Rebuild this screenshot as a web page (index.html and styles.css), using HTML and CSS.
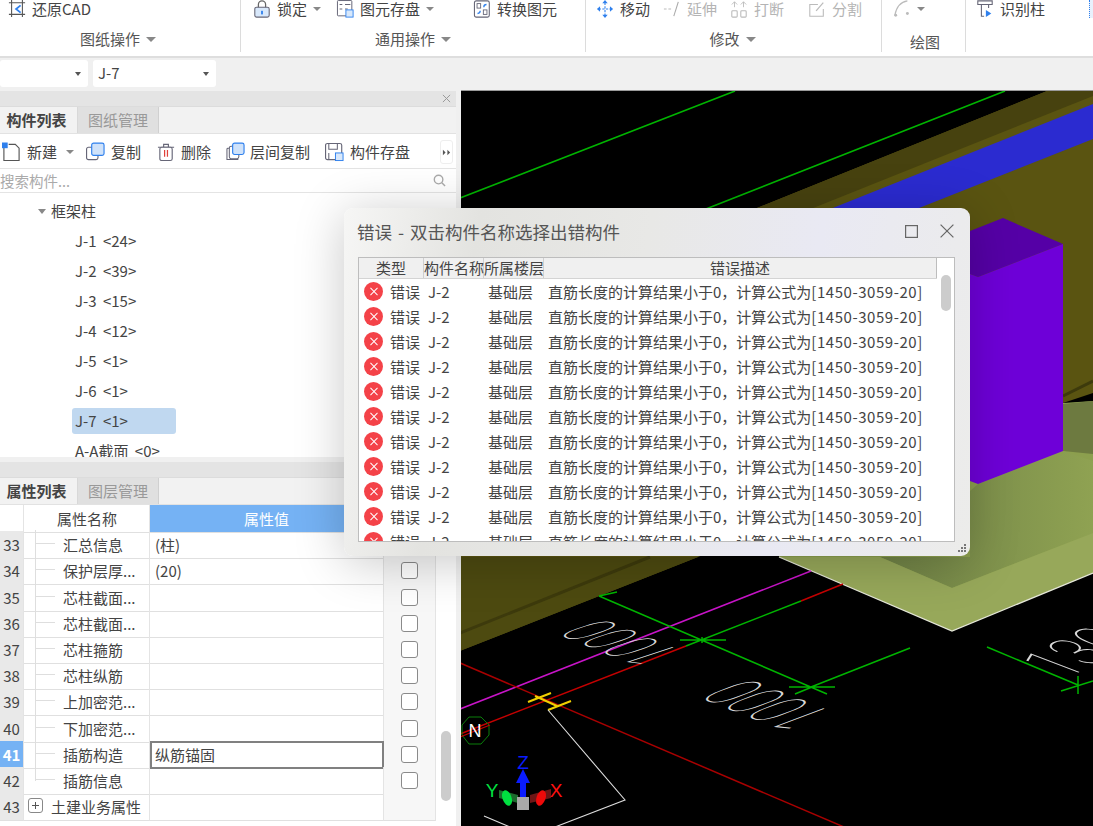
FILE: index.html
```html
<!DOCTYPE html>
<html lang="zh">
<head>
<meta charset="utf-8">
<title>错误</title>
<link rel="stylesheet" href="styles.css">
</head>
<body>
<div class="app">
  <header class="ribbon">
    <section class="group g1">
      <div class="tools">
        <span class="tool"><svg class="ico" viewBox="0 0 18 20"><path d="M0 16H18M3 0V19M15 0V19M0 3H18" fill="none" stroke="#555" stroke-width="1.2"/><path d="M13 6L8 10l5 4" fill="none" stroke="#2f80ed" stroke-width="2"/></svg>还原CAD</span>
      </div>
      <div class="glabel">图纸操作<i class="caret"></i></div>
    </section>
    <section class="group g2">
      <div class="tools">
        <span class="tool"><svg class="ico" viewBox="0 0 18 20"><path d="M5 9V5a4 4 0 0 1 8 0v4" fill="none" stroke="#666" stroke-width="1.4"/><rect x="1" y="8" width="16" height="11" rx="2" fill="#d8e8fb" stroke="#667" stroke-width="1.2"/><rect x="8" y="12" width="2" height="4" fill="#2f80ed"/></svg>锁定<i class="caret small"></i></span>
        <span class="tool t-save"><svg class="ico" viewBox="0 0 18 20"><rect x=".6" y=".6" width="16" height="17" rx="1" fill="#fff" stroke="#667" stroke-width="1.1"/><path d="M3 5h3M9 5h6M3 10h3M9 10h3" stroke="#667" stroke-width="1.2"/><rect x="10" y="11" width="8" height="8" fill="#d8e8fb" stroke="#2f80ed"/></svg>图元存盘<i class="caret small"></i></span>
        <span class="tool t-conv"><svg class="ico" viewBox="0 0 18 20"><rect x=".6" y="1" width="16.5" height="18" rx="2" fill="#fff" stroke="#667" stroke-width="1.2"/><rect x="3.5" y="4" width="4" height="5" fill="none" stroke="#667"/><rect x="10.5" y="11" width="4" height="5" fill="none" stroke="#667"/><path d="M11 8c0-2 1-3 3-3M7 12c0 2-1 3-3 3" fill="none" stroke="#2f80ed" stroke-width="1.4"/></svg>转换图元</span>
      </div>
      <div class="glabel">通用操作<i class="caret"></i></div>
    </section>
    <section class="group g3">
      <div class="tools">
        <span class="tool"><svg class="ico" viewBox="0 0 18 20"><path d="M9 3v14M2 10h14" stroke="#2f80ed" stroke-width="1.2" stroke-dasharray="2.5 1.5"/><path d="M9 0l3 3.5H6zM9 20l3-3.5H6zM0 10l3.5-3v6zM18 10l-3.500-3v6z" fill="#2f80ed"/></svg>移动</span>
        <span class="tool off t-ext"><svg class="ico" viewBox="0 0 18 20"><path d="M0 10h3M5 10h3" stroke="#bbb" stroke-width="1.2"/><path d="M11 18L16 2" stroke="#aaa" stroke-width="1.2"/></svg>延伸</span>
        <span class="tool off t-ext"><svg class="ico" viewBox="0 0 18 20"><rect x="1" y="12" width="6" height="7" rx="1" fill="none" stroke="#bbb" stroke-width="1.2"/><rect x="11" y="12" width="6" height="7" rx="1" fill="none" stroke="#bbb" stroke-width="1.2"/><path d="M4 2v6M14 2v6M1 5l3-3 3 3M11 5l3-3 3 3" fill="none" stroke="#bbb"/></svg>打断</span>
        <span class="tool off t-split"><svg class="ico" viewBox="0 0 18 20"><path d="M10 5H1v13h15V10" fill="none" stroke="#bbb" stroke-width="1.2"/><path d="M8 12L16 3" stroke="#bbb" stroke-width="1.4"/></svg>分割</span>
      </div>
      <div class="glabel">修改<i class="caret"></i></div>
    </section>
    <section class="group g4">
      <div class="tools">
        <span class="tool off"><svg class="ico" viewBox="0 0 18 20"><path d="M1 17C3 7 8 2 15 1" fill="none" stroke="#bbb" stroke-width="1.3"/><circle cx="2" cy="17" r="1.6" fill="#bbb"/><circle cx="15" cy="15" r="1.6" fill="#bbb"/></svg><i class="caret small"></i></span>
      </div>
      <div class="glabel low">绘图</div>
    </section>
    <section class="group g5">
      <div class="tools">
        <span class="tool"><svg class="ico" viewBox="0 0 18 20"><path d="M1 1h16v4H1zM4 5h10M5 5v13h3M13 5v4" fill="none" stroke="#667" stroke-width="1.2"/><path d="M10 11l6 4-6 4z" fill="#2f80ed"/></svg>识别柱</span>
        <i class="edge"></i>
      </div>
    </section>
  </header>

  <div class="subbar">
    <span class="select first"><i class="drop"></i></span>
    <span class="select second">J-7<i class="drop"></i></span>
  </div>

  <div class="main">
    <aside class="side">
      <div class="dock upper">
        <div class="dockhead"><svg class="dockx" viewBox="0 0 10 10"><path d="M1 1l8 8M9 1l-8 8" stroke="#999" stroke-width="1.1"/></svg></div>
        <div class="tabs"><span class="tab on">构件列表</span><span class="tab">图纸管理</span></div>
        <div class="actions">
          <span class="act a-new"><svg class="ico" viewBox="0 0 20 20"><path d="M2 5v14h16V6l-4-4H7" fill="#fff" stroke="#555" stroke-width="1.2"/><rect x="0" y="0" width="6" height="6" fill="#2f80ed"/></svg>新建<i class="caret small"></i></span>
          <span class="act a-copy"><svg class="ico" viewBox="0 0 20 20"><rect x=".6" y="5" width="12" height="13" rx="2" fill="#fff" stroke="#667" stroke-width="1.2"/><rect x="6" y=".6" width="13" height="13" rx="2" fill="#cfe2fa" stroke="#2f80ed" stroke-width="1.2"/></svg>复制</span>
          <span class="act a-del"><svg class="ico" viewBox="0 0 20 20"><path d="M1 5h17M7 5V2h5v3" fill="none" stroke="#667" stroke-width="1.2"/><rect x="3" y="5" width="13" height="14" rx="2" fill="#fff" stroke="#667" stroke-width="1.2"/><path d="M8 8v7M11 8v7" stroke="#e0403a" stroke-width="1.3"/></svg>删除</span>
          <span class="act a-floor"><svg class="ico" viewBox="0 0 20 20"><path d="M4 6H2a1 1 0 0 0-1 1v11h12M7 3" fill="none" stroke="#667" stroke-width="1.1"/><rect x="3.500" y="4" width="10" height="13" rx="2" fill="#fff" stroke="#667" stroke-width="1.1"/><rect x="7" y=".6" width="12" height="12" rx="2" fill="#cfe2fa" stroke="#2f80ed" stroke-width="1.2"/></svg>层间复制</span>
          <span class="act a-store"><svg class="ico" viewBox="0 0 20 20"><rect x=".6" y="1" width="17" height="17" rx="2" fill="#fff" stroke="#667" stroke-width="1.2"/><path d="M4 1v6h9V1M4 18v-7" fill="none" stroke="#667" stroke-width="1.1"/><rect x="11" y="11" width="8" height="8" fill="#d8e8fb" stroke="#2f80ed"/></svg>构件存盘</span>
          <span class="more"><svg viewBox="0 0 10 10" class="moreico"><path d="M1 2l3 3-3 3zM6 2l3 3-3 3z" fill="#555"/></svg></span>
        </div>
        <div class="search"><span>搜索构件...</span><svg class="lens" viewBox="0 0 14 14"><circle cx="6" cy="6" r="4.600" fill="none" stroke="#aaa" stroke-width="1.5"/><path d="M9.500 9.500L13 13" stroke="#aaa" stroke-width="1.5"/></svg></div>
        <div class="tree">
          <div class="node root"><i class="treecaret"></i>框架柱</div>
          <div class="node">J-1 &lt;24&gt;</div>
          <div class="node">J-2 &lt;39&gt;</div>
          <div class="node">J-3 &lt;15&gt;</div>
          <div class="node">J-4 &lt;12&gt;</div>
          <div class="node">J-5 &lt;1&gt;</div>
          <div class="node">J-6 &lt;1&gt;</div>
          <div class="node sel">J-7 &lt;1&gt;</div>
          <div class="node">A-A截面 &lt;0&gt;</div>
        </div>
      </div>

      <div class="dock lower">
        <div class="dockhead"></div>
        <div class="tabs"><span class="tab on">属性列表</span><span class="tab">图层管理</span></div>
        <div class="ptable">
          <div class="prow head"><span class="pnum"></span><span class="pname">属性名称</span><span class="pval">属性值</span><span class="pchk"></span></div>
          <div class="prow"><span class="pnum">33</span><span class="pname leaf">汇总信息</span><span class="pval">(柱)</span><span class="pchk"></span></div>
          <div class="prow"><span class="pnum">34</span><span class="pname leaf">保护层厚...</span><span class="pval">(20)</span><span class="pchk"><i class="box"></i></span></div>
          <div class="prow"><span class="pnum">35</span><span class="pname leaf">芯柱截面...</span><span class="pval"></span><span class="pchk"><i class="box"></i></span></div>
          <div class="prow"><span class="pnum">36</span><span class="pname leaf">芯柱截面...</span><span class="pval"></span><span class="pchk"><i class="box"></i></span></div>
          <div class="prow"><span class="pnum">37</span><span class="pname leaf">芯柱箍筋</span><span class="pval"></span><span class="pchk"><i class="box"></i></span></div>
          <div class="prow"><span class="pnum">38</span><span class="pname leaf">芯柱纵筋</span><span class="pval"></span><span class="pchk"><i class="box"></i></span></div>
          <div class="prow"><span class="pnum">39</span><span class="pname leaf">上加密范...</span><span class="pval"></span><span class="pchk"><i class="box"></i></span></div>
          <div class="prow"><span class="pnum">40</span><span class="pname leaf">下加密范...</span><span class="pval"></span><span class="pchk"><i class="box"></i></span></div>
          <div class="prow"><span class="pnum cur">41</span><span class="pname leaf">插筋构造</span><span class="pval edit">纵筋锚固</span><span class="pchk"><i class="box"></i></span></div>
          <div class="prow"><span class="pnum">42</span><span class="pname leaf last">插筋信息</span><span class="pval"></span><span class="pchk"><i class="box"></i></span></div>
          <div class="prow"><span class="pnum">43</span><span class="pname grp"><i class="plus"></i>土建业务属性</span><span class="pval"></span><span class="pchk"></span></div>
          <i class="pthumb"></i>
        </div>
      </div>
    </aside>

    <div class="canvas">
      <svg class="scene" viewBox="461 90 632 736" width="632" height="736">
        <defs>
          <linearGradient id="fnd" x1="0" x2="1" y1="0" y2="0"><stop offset="0" stop-color="#6f8146"/><stop offset="1" stop-color="#8fa252"/></linearGradient>
        </defs>
        <rect x="461" y="90" width="632" height="736" fill="#000"/>
        <path d="M460 197L735 90M650 230L1005 90" stroke="#00b400" stroke-width="1.6"/>
        <polygon points="1047,90 1093,90 1093,392 1063,402 698,556 460,650 460,400 700,230" fill="#5a5411"/>
        <polygon points="1047,90 1093,90 1093,95 731,240 675,240" fill="#47420f"/>
        <polygon points="750,240 1093,103 1093,138 836,240" fill="#2b2bd0"/>
        <polygon points="460,556 698,556 460,650" fill="#4d4a10"/>
        <path d="M460 632L650 556" stroke="#3d3a0c" stroke-width="3"/>
        <path d="M1063 395L1093 380" stroke="#3d3a0c" stroke-width="3"/>
        <polygon points="960,400 1063,402 1093,400 1093,572 952,630 779,556 800,480" fill="#8c9f4e"/>
        <polygon points="1063,403 1093,400 1093,453 1063,450" fill="#6d7a40"/>
        <polygon points="880,556 952,587 1093,532 1093,460 1063,450 978,483 970,490 970,556" fill="url(#fnd)"/>
        <polygon points="779,556 880,556 952,587 1093,532 1093,572 952,630" fill="#97a85a"/>
        <path d="M779 556L952 630L1093 572" fill="none" stroke="#e4e6d8" stroke-width="1.3"/>
        <polygon points="970,230 1003,217 1063,243 978,276 970,273" fill="#5500a6"/>
        <polygon points="970,273 978,276 1063,243 1063,450 978,483 970,480" fill="#6e00d8"/>

        <path d="M460 708L811 570" stroke="#c814c8" stroke-width="1.600"/>
        <path d="M460 733L686 645M801 600L843 583" stroke="#c40000" stroke-width="1.500"/>
        <path d="M460 662L844 826" stroke="#a80000" stroke-width="1.500"/>
        <path d="M686 645L801 600M599 595L827 693M811 686L910 647M987 646L1078 684M680 639H726M789 686H835M795 693L812 686M702 636V642M1078 675V693M1061 690L1093 680M599 595L617 591" stroke="#00b400" stroke-width="1.500" fill="none"/>
        <path d="M528 701L551 692M548 709L571 700M535 695L557 705" stroke="#f0d000" stroke-width="2" fill="none"/>
        <path d="M548 709L625 799L555 826M484 815L510 826" stroke="#ddd" stroke-width="1.100" fill="none"/>
        <text class="cad" transform="matrix(-3.78 -1.53 6.4 -2.1 684.6 651)" font-size="10">1000</text>
        <text class="cad" transform="matrix(-4.1 -1.6 6.9 -2.6 836.5 712.5)" font-size="10">1000</text>
        <text class="cad" transform="matrix(4.5 -2.2 6.8 2.6 1065 678)" font-size="10">1300</text>

        <polygon points="469,716 481,716 489,724 489,734 481,743 469,743 462,734 462,724" fill="none" stroke="#0a7f0a" stroke-width="1"/>
        <path d="M460 736L490 724" stroke="#c40000" stroke-width="1.200"/>
        <text class="north" x="475" y="736">N</text>

        <polygon points="523,768 530,782 526,782 526,800 520,800 520,782 516,782" fill="#0a1cff"/>
        <path d="M499 789L518 794V802L499 797z" fill="#1c6b2c"/>
        <ellipse cx="507" cy="797" rx="4.500" ry="8" transform="rotate(-20 507 797)" fill="#00e040"/>
        <path d="M551 788L530 794V802L551 797z" fill="#6e1616"/>
        <ellipse cx="541" cy="797" rx="4.500" ry="8" transform="rotate(20 541 797)" fill="#ee0a0a"/>
        <rect x="517" y="796" width="12" height="13" fill="#a8a8a8"/>
        <text class="ax az" x="523" y="768">Z</text>
        <text class="ax ay" x="492" y="796">Y</text>
        <text class="ax ax-x" x="556" y="796">X</text>
      </svg>
    </div>
  </div>

  <div class="dialog">
    <div class="dtitle">
      <span class="dname">错误 - 双击构件名称选择出错构件</span>
      <span class="dctl">
        <svg class="dmax" viewBox="0 0 13 13"><rect x=".6" y=".6" width="11.800" height="11.800" fill="none" stroke="#666" stroke-width="1.200"/></svg>
        <svg class="dclose" viewBox="0 0 14 14"><path d="M.6.6l12.800 12.800M13.400.6L.6 13.400" stroke="#666" stroke-width="1.200"/></svg>
      </span>
    </div>
    <div class="dtable">
      <div class="dhead"><span class="c1">类型</span><span class="c2">构件名称</span><span class="c3">所属楼层</span><span class="c4">错误描述</span></div>
      <div class="dbody">
        <div class="drow"><i class="err"></i><span class="r1">错误</span><span class="r2">J-2</span><span class="r3">基础层</span><span>直筋长度的计算结果小于0，计算公式为<span class="formula">[1450-3059-20]</span></span></div>
        <div class="drow"><i class="err"></i><span class="r1">错误</span><span class="r2">J-2</span><span class="r3">基础层</span><span>直筋长度的计算结果小于0，计算公式为<span class="formula">[1450-3059-20]</span></span></div>
        <div class="drow"><i class="err"></i><span class="r1">错误</span><span class="r2">J-2</span><span class="r3">基础层</span><span>直筋长度的计算结果小于0，计算公式为<span class="formula">[1450-3059-20]</span></span></div>
        <div class="drow"><i class="err"></i><span class="r1">错误</span><span class="r2">J-2</span><span class="r3">基础层</span><span>直筋长度的计算结果小于0，计算公式为<span class="formula">[1450-3059-20]</span></span></div>
        <div class="drow"><i class="err"></i><span class="r1">错误</span><span class="r2">J-2</span><span class="r3">基础层</span><span>直筋长度的计算结果小于0，计算公式为<span class="formula">[1450-3059-20]</span></span></div>
        <div class="drow"><i class="err"></i><span class="r1">错误</span><span class="r2">J-2</span><span class="r3">基础层</span><span>直筋长度的计算结果小于0，计算公式为<span class="formula">[1450-3059-20]</span></span></div>
        <div class="drow"><i class="err"></i><span class="r1">错误</span><span class="r2">J-2</span><span class="r3">基础层</span><span>直筋长度的计算结果小于0，计算公式为<span class="formula">[1450-3059-20]</span></span></div>
        <div class="drow"><i class="err"></i><span class="r1">错误</span><span class="r2">J-2</span><span class="r3">基础层</span><span>直筋长度的计算结果小于0，计算公式为<span class="formula">[1450-3059-20]</span></span></div>
        <div class="drow"><i class="err"></i><span class="r1">错误</span><span class="r2">J-2</span><span class="r3">基础层</span><span>直筋长度的计算结果小于0，计算公式为<span class="formula">[1450-3059-20]</span></span></div>
        <div class="drow"><i class="err"></i><span class="r1">错误</span><span class="r2">J-2</span><span class="r3">基础层</span><span>直筋长度的计算结果小于0，计算公式为<span class="formula">[1450-3059-20]</span></span></div>
        <div class="drow"><i class="err"></i><span class="r1">错误</span><span class="r2">J-2</span><span class="r3">基础层</span><span>直筋长度的计算结果小于0，计算公式为<span class="formula">[1450-3059-20]</span></span></div>
      </div>
      <i class="dthumb"></i>
    </div>
    <svg class="grip" viewBox="0 0 10 10"><path d="M8 0h2v2H8zM5 3h2v2H5zM8 3h2v2H8zM2 6h2v2H2zM5 6h2v2H5zM8 6h2v2H8z" transform="translate(0 1)" fill="#777"/></svg>
  </div>
</div>
</body>
</html>
```

FILE: styles.css
```css
* { box-sizing: border-box; }
html, body { margin: 0; padding: 0; }
body {
  font-family: "Noto Sans CJK SC", "Noto Sans", sans-serif;
  font-size: 15px;
  color: #444;
  overflow: hidden;
}
i { display: block; font-style: normal; }
.app {
  position: relative;
  width: 1093px;
  height: 826px;
  overflow: hidden;
  display: flex;
  flex-direction: column;
  background: #f0f0f0;
}

/* ribbon */
.ribbon {
  flex: none;
  height: 58px;
  display: flex;
  background: #fff;
  border-bottom: 2px solid #dedede;
}
.group {
  flex: none;
  height: 52px;
  display: flex;
  flex-direction: column;
  border-right: 1px solid #dcdcdc;
}
.g1 { width: 241px; padding-left: 8px; }
.g2 { width: 345px; padding-left: 12px; }
.g3 { width: 296px; padding-left: 10px; }
.g4 { width: 84px; padding-left: 11px; }
.g5 { flex: 1; padding-left: 10px; border-right: 0; }
.tools { height: 18px; display: flex; align-items: center; }
.tool { display: flex; align-items: center; gap: 6px; line-height: 18px; white-space: nowrap; }
.ico { flex: none; width: 18px; height: 18px; display: block; }
.t-save { margin-left: 15px; }
.t-conv { margin-left: 39px; }
.t-ext { margin-left: 13px; }
.t-split { margin-left: 24px; }
.off { color: #b4b4b4; }
.edge {
  margin-left: auto;
  width: 4px;
  height: 18px;
  border-left: 1px dotted #2f80ed;
  background: #e8f1fc;
}
.glabel {
  margin-top: 11px;
  margin-left: -12px;
  height: 20px;
  line-height: 20px;
  display: flex;
  justify-content: center;
  align-items: center;
  gap: 6px;
  color: #555;
}
.glabel.low { margin-top: 14px; margin-left: -8px; }
.caret {
  width: 0;
  height: 0;
  border-left: 5px solid transparent;
  border-right: 5px solid transparent;
  border-top: 5px solid #888;
}
.caret.small { border-left-width: 4px; border-right-width: 4px; border-top-width: 4px; }

/* sub toolbar */
.subbar {
  flex: none;
  height: 32px;
  display: flex;
  gap: 5px;
  padding-top: 2px;
  background: #f0f0f0;
}
.select {
  position: relative;
  height: 27px;
  line-height: 25px;
  background: #fff;
  border-radius: 3px;
  padding-left: 5px;
}
.select.first { width: 88px; }
.select.second { width: 123px; }
.drop {
  position: absolute;
  right: 7px;
  top: 12px;
  border-left: 3.500px solid transparent;
  border-right: 3.500px solid transparent;
  border-top: 4px solid #555;
}

/* side */
.main { flex: 1; display: flex; min-height: 0; }
.side { width: 461px; flex: none; display: flex; flex-direction: column; }
.dock { width: 456px; display: flex; flex-direction: column; background: #fff; overflow: hidden; }
.dock.upper { height: 366px; margin-top: 1px; }
.dock.lower { flex: 1; margin-top: 5px; }
.dockhead {
  flex: none;
  height: 15px;
  background: #e4e4e4;
  position: relative;
}
.dockx { position: absolute; right: 5px; top: 3px; width: 9px; height: 9px; }
.tabs {
  flex: none;
  height: 28px;
  display: flex;
  background: #f2f2f2;
  border-top: 1px solid #dcdcdc;
  border-bottom: 1px solid #e2e2e2;
}
.tab {
  width: 81px;
  line-height: 25px;
  text-align: center;
  color: #999;
  background: #e0e0e0;
  border-right: 1px solid #d0d0d0;
}
.tab.on {
  width: 78px;
  padding-right: 4px;
  color: #444;
  font-weight: 700;
  background: #f2f2f2;
  border-right: 1px solid #d8d8d8;
}
.actions {
  flex: none;
  height: 35px;
  display: flex;
  align-items: center;
  padding-left: 2px;
  padding-top: 2px;
  border-bottom: 1px solid #e4e4e4;
  position: relative;
}
.act { display: flex; align-items: center; gap: 6px; line-height: 20px; white-space: nowrap; }
.act .ico { width: 19px; height: 20px; }
.a-new .caret { margin-left: 3px; }
.a-copy { margin-left: 12px; }
.a-del { margin-left: 16px; gap: 5px; }
.a-floor { margin-left: 15px; gap: 5px; }
.a-store { margin-left: 15px; }
.more {
  margin-left: auto;
  margin-right: 3px;
  width: 13px;
  height: 24px;
  border: 1px solid #eee;
  border-radius: 3px;
  display: flex;
  align-items: center;
  justify-content: center;
}
.moreico { width: 9px; height: 9px; display: block; }
.search {
  flex: none;
  height: 24px;
  display: flex;
  align-items: center;
  justify-content: space-between;
  padding-right: 10px;
  color: #aaa;
  font-size: 14.500px;
  line-height: 24px;
  border-bottom: 1px solid #e4e4e4;
}
.lens { width: 13px; height: 13px; display: block; }
.tree { flex: 1; overflow: hidden; padding-top: 3px; }
.node {
  height: 30px;
  line-height: 30px;
  padding-left: 75px;
  position: relative;
  word-spacing: 3px;
}
.node.root { padding-left: 51px; }
.treecaret {
  position: absolute;
  left: 38px;
  top: 13px;
  border-left: 4.500px solid transparent;
  border-right: 4.500px solid transparent;
  border-top: 5px solid #888;
}
.node.sel { isolation: isolate; }
.node.sel::before {
  content: "";
  position: absolute;
  left: 72px;
  top: 2px;
  width: 104px;
  height: 26px;
  background: #c0d8f0;
  border-radius: 3px;
  z-index: -1;
}

/* property table */
.ptable { flex: 1; position: relative; background: #fff; overflow: hidden; }
.prow {
  height: 26.2px;
  display: grid;
  grid-template-columns: 24px 126px 234px 52px;
  line-height: 27px;
}
.prow > span { border-bottom: 1px solid #e0e0e0; border-right: 1px solid #e4e4e4; }
.pnum {
  background: #e9e9e9;
  text-align: center;
  color: #444;
}
.prow.head .pnum { background: #fff; }
.pnum.cur { background: #75b2f4; color: #fff; font-weight: 700; }
.pname { position: relative; padding-left: 39px; white-space: nowrap; }
.prow.head .pname { padding-left: 33px; }
.leaf::before {
  content: "";
  position: absolute;
  left: 11px;
  top: -1px;
  bottom: -1px;
  border-left: 1px solid #dedede;
}
.leaf::after {
  content: "";
  position: absolute;
  left: 12px;
  top: 12px;
  width: 19px;
  border-top: 1px solid #dedede;
}
.leaf.last::before { bottom: 13px; }
.grp { padding-left: 27px; }
.plus {
  position: absolute;
  left: 4px;
  top: 5px;
  width: 15px;
  height: 15px;
  border: 1px solid #888;
  border-radius: 3px;
}
.plus::before {
  content: "";
  position: absolute;
  left: 3px;
  top: 6px;
  width: 7px;
  border-top: 1px solid #555;
}
.plus::after {
  content: "";
  position: absolute;
  left: 6px;
  top: 3px;
  height: 7px;
  border-left: 1px solid #555;
}
.pval { padding-left: 5px; }
.prow.head .pval {
  background: #75b2f4;
  color: #fff;
  text-align: center;
  padding-left: 0;
}
.pval.edit { border: 2px solid #808080 !important; padding-left: 3px; line-height: 23px; }
.pchk { display: flex; align-items: center; justify-content: center; background: #f7f7f7; }
.box {
  width: 17px;
  height: 17px;
  background: #fff;
  border: 1.500px solid #8a8a8a;
  border-radius: 3px;
}
.pthumb {
  position: absolute;
  left: 441px;
  top: 226px;
  width: 10px;
  height: 70px;
  background: #ccc;
  border-radius: 5px;
}

/* canvas */
.canvas { flex: 1; min-width: 0; border-top: 1px solid #9a9a9a; overflow: hidden; }
.scene { display: block; }
.cad {
  font-family: Roboto, "Liberation Sans", sans-serif;
  font-weight: 100;
  fill: #d8d8d8;
}
.north {
  font-family: "Liberation Sans", sans-serif;
  font-size: 18px;
  fill: #fff;
  text-anchor: middle;
}
.ax { font-family: "Liberation Sans", sans-serif; font-size: 19px; text-anchor: middle; }
.az { fill: #0a1cff; }
.ay { fill: #00e040; }
.ax-x { fill: #ff1010; }

/* dialog */
.dialog {
  position: absolute;
  left: 344px;
  top: 208px;
  width: 626px;
  height: 348px;
  padding: 0 15px 0 14px;
  border-radius: 9px;
  background: linear-gradient(100deg, #f6f6f5 0%, #e3e3e0 20%, #e8e8e6 45%, #e9e9f3 70%, #ececea 100%);
  box-shadow: 0 6px 50px rgba(0, 0, 0, .22);
  display: flex;
  flex-direction: column;
}
.dtitle {
  flex: none;
  height: 49px;
  display: flex;
  align-items: center;
  justify-content: space-between;
  color: #555;
  padding-bottom: 2px;
}
.dname { font-size: 17.500px; word-spacing: 2px; margin-left: -1px; }
.dctl { display: flex; align-items: center; gap: 22px; margin-top: -1px; margin-right: 1px; }
.dmax { width: 13px; height: 13px; display: block; }
.dclose { width: 14px; height: 14px; display: block; }
.dtable {
  position: relative;
  flex: none;
  width: 597px;
  height: 285px;
  background: #fff;
  border: 1px solid #bdbdbd;
  overflow: hidden;
}
.dhead {
  height: 21px;
  width: 578px;
  display: flex;
  background: #f0f0f0;
  border-bottom: 1px solid #d4d4d4;
  line-height: 20px;
  white-space: nowrap;
}
.dhead span { text-align: center; border-right: 1px solid #cfcfcf; }
.dhead .c1 { width: 65px; }
.dhead .c2 { width: 60px; }
.dhead .c3 { width: 60px; }
.dhead .c4 { flex: 1; border-right: 1px solid #bdbdbd; }
.dbody { height: 263px; overflow: hidden; }
.drow {
  height: 25px;
  display: flex;
  align-items: center;
  white-space: nowrap;
  line-height: 25px;
  padding-left: 5px;
}
.formula { letter-spacing: .55px; }
.err {
  position: relative;
  flex: none;
  width: 19px;
  height: 19px;
  border-radius: 50%;
  background: #f44248;
}
.err::before, .err::after {
  content: "";
  position: absolute;
  left: 4.500px;
  top: 9px;
  width: 10px;
  height: 1px;
  background: #fff;
  transform: rotate(45deg);
}
.err::after { transform: rotate(-45deg); }
.r1 { margin-left: 7px; width: 38px; }
.r2 { width: 60px; }
.r3 { width: 60px; }
.dthumb {
  position: absolute;
  left: 582px;
  top: 17px;
  width: 10px;
  height: 36px;
  background: #ccc;
  border-radius: 5px;
}
.grip {
  position: absolute;
  right: 4px;
  bottom: 3px;
  width: 10px;
  height: 10px;
  display: block;
}
```
